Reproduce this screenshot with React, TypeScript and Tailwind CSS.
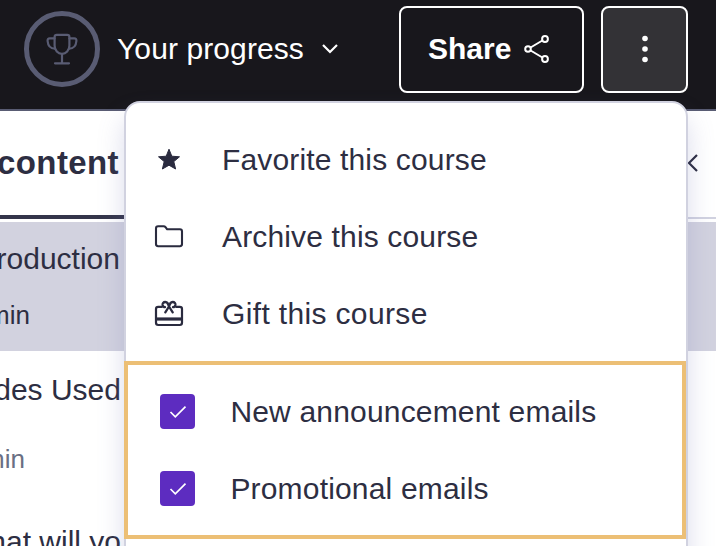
import { ReactNode } from "react"

const ShareIcon = () => (
    <svg width="26" height="28" viewBox="0 0 26 28" fill="none" stroke="white" strokeWidth="2">
        <circle cx="4" cy="14" r="2.8" />
        <circle cx="21" cy="4" r="2.9" />
        <circle cx="21" cy="24" r="2.9" />
        <path d="M6.6 12.5L18.4 5.5M6.6 15.5L18.4 22.5" />
    </svg>
)

const TrophyIcon = () => (
    <svg width="32" height="32" viewBox="0 0 32 32" fill="none" stroke="#595c73" strokeWidth="2.2" strokeLinecap="round" strokeLinejoin="round">
        <path d="M8.6 4Q8.6 1.8 10.8 1.8H21.2Q23.4 1.8 23.4 4V12.5C23.4 17.5 20 20.8 16 20.8C12 20.8 8.6 17.5 8.6 12.5Z" />
        <path d="M8.6 5.4H3.8Q1.4 5.4 1.6 8C2 13 4.5 15.6 8.8 15.6M23.4 5.4H28.2Q30.6 5.4 30.4 8C30 13 27.5 15.6 23.2 15.6" />
        <path d="M16 21V30M9 30.3H23" />
    </svg>
)

const StarIcon = () => (
    <svg width="24" height="24" viewBox="0 0 24 24" fill="#2a2b3f" stroke="#2a2b3f" strokeWidth="1" strokeLinejoin="round">
        <path d="M12 1.2L14.8 8.2L22.5 8.8L16.8 13.6L18.6 21L12 17.2L5.4 21L7.2 13.6L1.5 8.8L9.2 8.2Z" />
    </svg>
)

const FolderIcon = () => (
    <svg width="30" height="24" viewBox="0 0 30 24" fill="none" stroke="#2a2b3f" strokeWidth="2.1" strokeLinejoin="round">
        <path d="M2 3.4Q2 1.3 4.1 1.3H9.6Q10.8 1.3 11.5 2.2L13.2 4.3H25.9Q28 4.3 28 6.4V19.1Q28 21.2 25.9 21.2H4.1Q2 21.2 2 19.1Z" />
    </svg>
)

const GiftIcon = () => (
    <svg width="30" height="28" viewBox="0 0 30 28" fill="none" stroke="#2a2b3f" strokeWidth="2.2" strokeLinecap="round" strokeLinejoin="round">
        <path d="M8 6.8H4.2Q2 6.8 2 9V22.8Q2 25 4.2 25H25.8Q28 25 28 22.8V9Q28 6.8 25.8 6.8H22" />
        <path d="M15 7.5C14.5 4 13.5 2 11.3 2C9.3 2 8.3 3.4 8.6 5C8.9 6.4 10 7.2 11 7.2M15 7.5C15.5 4 16.5 2 18.7 2C20.7 2 21.7 3.4 21.4 5C21.1 6.4 20 7.2 19 7.2M15 6.5L11.3 12.3M15 6.5L18.7 12.3" strokeWidth="2.3" />
        <path d="M3 19H27" strokeWidth="3.2" strokeLinecap="butt" />
    </svg>
)

const MenuItem = (props: { icon: ReactNode, className: string, children: ReactNode }) => (
    <button className="flex h-[77px] w-full items-center pl-[24px] text-left">
        <span className="flex w-[38px] justify-center">{props.icon}</span>
        <span className={"pl-[34px] " + props.className}>{props.children}</span>
    </button>
)

const EmailOption = (props: { children: ReactNode }) => (
    <label className="flex h-[77px] items-center gap-[35px] pl-[32.4px]">
        <span className="flex size-[35px] items-center justify-center rounded-[4px] bg-[#5d2cc0]">
            <svg width="18" height="14" viewBox="0 0 18 14" fill="none" stroke="white" strokeWidth="1.7">
                <path d="M1.5 7L6.3 11.8L16.5 1.7" />
            </svg>
        </span>
        {props.children}
    </label>
)

export default function App() {
    return (
        <div className="relative h-[546px] w-[716px] overflow-hidden whitespace-nowrap bg-white font-['Liberation_Sans',sans-serif] text-[30px] leading-[36px] text-[#2d2e42]">
            <header className="flex h-[111px] items-start border-b-2 border-[#595c73] bg-[#18171c] text-white">
                <div className="mt-[11px] ml-[24px] flex size-[76px] items-center justify-center rounded-full border-[5px] border-[#595c73]">
                    <TrophyIcon />
                </div>
                <div className="mt-[31px] ml-[17px] flex w-[282px] items-center gap-[17px]">
                    <span className="tracking-[0.1px]">Your progress</span>
                    <svg width="18" height="12" viewBox="0 0 18 12" fill="none" stroke="white" strokeWidth="2.2">
                        <path d="M2 2L9 9L16 2" />
                    </svg>
                </div>
                <button className="mt-[6px] flex h-[87px] w-[185px] items-center gap-[13px] rounded-[8px] border-2 border-white pb-[2px] pl-[27px] font-bold">
                    Share
                    <ShareIcon />
                </button>
                <button className="mt-[6px] ml-[17px] flex h-[87px] w-[87px] items-center justify-center rounded-[8px] border-2 border-white bg-[#333236] pb-[2px]">
                    <svg width="6" height="28" viewBox="0 0 6 28" fill="white">
                        <circle cx="3" cy="3.5" r="2.8" />
                        <circle cx="3" cy="14" r="2.8" />
                        <circle cx="3" cy="24.5" r="2.8" />
                    </svg>
                </button>
            </header>

            <div className="flex h-[108px]">
                <div className="flex h-full w-[124px] items-center justify-end border-b-4 border-[#34354a] pr-[5px] text-[33px] font-bold tracking-[0.4px]">
                    content
                </div>
                <div className="flex h-full flex-1 items-center justify-end border-b-2 border-[#d1d2e0] pr-[18px] pb-[2px]">
                    <svg width="12" height="20" viewBox="0 0 12 20" fill="none" stroke="#2a2b3f" strokeWidth="2.2">
                        <path d="M11 2L3 10L11 18" />
                    </svg>
                </div>
            </div>
            <div className="mt-[3px] h-[129px] bg-[#d2d2df] pt-[19px]">
                <div className="flex w-[120px] justify-end">roduction</div>
                <div className="mt-[20px] flex w-[30px] justify-end text-[26px]">min</div>
            </div>
            <div className="pt-[21px]">
                <div className="flex w-[121px] justify-end">des Used</div>
                <div className="mt-[33px] flex w-[25px] justify-end text-[26px] text-[#6a6f84]">min</div>
                <div className="mt-[47px] flex w-[121px] justify-end">hat will yo</div>
            </div>

            <div className="absolute top-[101px] left-[124px] h-[470px] w-[564px] rounded-[16px] border-2 border-[#d1d2e0] bg-white pt-[18px] shadow-[0_16px_26px_rgba(110,115,180,0.25)]">
                <MenuItem icon={<StarIcon />} className="tracking-[0.15px]">Favorite this course</MenuItem>
                <MenuItem icon={<FolderIcon />} className="tracking-[0.15px]">Archive this course</MenuItem>
                <MenuItem icon={<GiftIcon />} className="tracking-[0.35px]">Gift this course</MenuItem>
                <div className="mt-[9px] -ml-[2px] h-[178px] w-[562px] border-4 border-[#ecbf75] pt-[8px] tracking-[0.18px]">
                    <EmailOption>New announcement emails</EmailOption>
                    <EmailOption>Promotional emails</EmailOption>
                </div>
            </div>
        </div>
    )
}
